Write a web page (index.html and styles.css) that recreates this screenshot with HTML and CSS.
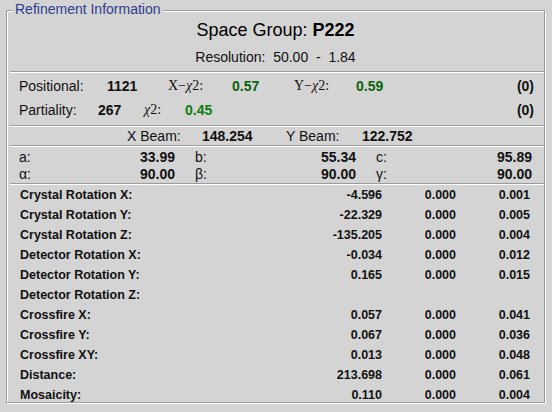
FILE: index.html
```html
<!DOCTYPE html>
<html>
<head>
<meta charset="utf-8">
<link rel="stylesheet" href="styles.css">
</head>
<body>
<div class="frame">
  <div class="legend">Refinement Information</div>
  <div class="title">Space Group: <b>P222</b></div>
  <div class="resolution">Resolution:  50.00  -  1.84</div>
  <div class="sep"></div>
  <div class="stat-row pos">
    <span>Positional:</span>
    <span class="num">1121</span>
    <span class="chi">X−<i>χ</i>2:</span>
    <span class="num green">0.57</span>
    <span class="chi">Y−<i>χ</i>2:</span>
    <span class="num green">0.59</span>
    <span class="num paren">(0)</span>
  </div>
  <div class="stat-row part">
    <span>Partiality:</span>
    <span class="num">267</span>
    <span class="chi"><i>χ</i>2:</span>
    <span class="num green2">0.45</span>
    <span class="num paren">(0)</span>
  </div>
  <div class="sep sep-after-stats"></div>
  <div class="beam-row">
    <span>X Beam:</span>
    <span class="num">148.254</span>
    <span>Y Beam:</span>
    <span class="num">122.752</span>
  </div>
  <div class="sep"></div>
  <div class="cell-grid">
    <div class="cell"><span>a:</span><span class="num">33.99</span></div>
    <div class="cell"><span>b:</span><span class="num">55.34</span></div>
    <div class="cell"><span>c:</span><span class="num">95.89</span></div>
    <div class="cell"><span>α:</span><span class="num">90.00</span></div>
    <div class="cell"><span>β:</span><span class="num">90.00</span></div>
    <div class="cell"><span>γ:</span><span class="num">90.00</span></div>
  </div>
  <div class="sep sep-after-cell"></div>
  <div class="params">
    <span>Crystal Rotation X:</span><span>-4.596</span><span>0.000</span><span>0.001</span>
    <span>Crystal Rotation Y:</span><span>-22.329</span><span>0.000</span><span>0.005</span>
    <span>Crystal Rotation Z:</span><span>-135.205</span><span>0.000</span><span>0.004</span>
    <span>Detector Rotation X:</span><span>-0.034</span><span>0.000</span><span>0.012</span>
    <span>Detector Rotation Y:</span><span>0.165</span><span>0.000</span><span>0.015</span>
    <span>Detector Rotation Z:</span><span></span><span></span><span></span>
    <span>Crossfire X:</span><span>0.057</span><span>0.000</span><span>0.041</span>
    <span>Crossfire Y:</span><span>0.067</span><span>0.000</span><span>0.036</span>
    <span>Crossfire XY:</span><span>0.013</span><span>0.000</span><span>0.048</span>
    <span>Distance:</span><span>213.698</span><span>0.000</span><span>0.061</span>
    <span>Mosaicity:</span><span>0.110</span><span>0.000</span><span>0.004</span>
  </div>
</div>
</body>
</html>
```

FILE: styles.css
```css
html, body {
  margin: 0;
  padding: 0;
  background: #d4d4d4;
}
body {
  font-family: "Liberation Sans", Arial, sans-serif;
  font-size: 14px;
  color: #111;
  width: 552px;
  height: 412px;
  overflow: hidden;
}
.frame {
  position: relative;
  box-sizing: border-box;
  margin: 10px 0 0 6px;
  width: 539px;
  height: 393px;
  border: 1px solid #9c9c9c;
  box-shadow: 1px 1px 0 #fff, inset 1px 1px 0 #fff;
  padding: 0 0 0 0;
}
.legend {
  position: absolute;
  top: -11px;
  left: 6px;
  padding: 0 2px;
  background: #d4d4d4;
  color: #2c3e8e;
  line-height: 18px;
  font-size: 14px;
}
.title {
  margin-top: 8px;
  text-align: center;
  font-size: 18px;
  line-height: 22px;
  color: #000;
}
.title b {
  font-weight: bold;
}
.resolution {
  margin-top: 7px;
  text-align: center;
  line-height: 18px;
  white-space: pre;
}
.sep {
  margin: 0 0 0 3px;
  height: 0;
  border-top: 1px solid #9c9c9c;
  border-bottom: 1px solid #fff;
}
.resolution + .sep {
  margin-top: 5px;
}
.num {
  font-weight: bold;
}
.green {
  color: #0a640a;
}
.green2 {
  color: #0d7e0d;
}
.chi {
  font-family: "Liberation Serif", "Times New Roman", serif;
  font-size: 14px;
}
.stat-row {
  display: grid;
  height: 24px;
  align-items: center;
  padding: 0 10px 0 12px;
}
.pos {
  margin-top: 1px;
  grid-template-columns: 88px 61px 64px 62px 62px 1fr auto;
}
.part {
  grid-template-columns: 79px 46px 41px 1fr auto;
}
.sep-after-stats {
  margin-top: 3px;
}
.beam-row {
  display: grid;
  grid-template-columns: 75px 84px 76px auto;
  height: 18px;
  align-items: center;
  padding-left: 120px;
}
.cell-grid {
  display: grid;
  grid-template-columns: 156px 161px 156px;
  column-gap: 20px;
  grid-auto-rows: 17px;
  align-items: center;
  margin-top: 1px;
  padding-left: 12px;
}
.cell {
  display: flex;
  justify-content: space-between;
}
.sep-after-cell {
  margin-top: 1px;
}
.params {
  display: grid;
  grid-template-columns: 1fr 70px 74px 74px;
  grid-auto-rows: 20px;
  align-items: center;
  padding: 0 14px 0 13px;
  font-size: 12.5px;
  font-weight: bold;
}
.params span:not(:nth-child(4n+1)) {
  text-align: right;
}
```
